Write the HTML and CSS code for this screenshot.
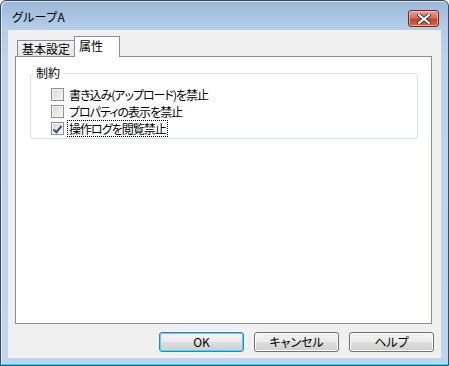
FILE: index.html
```html
<!DOCTYPE html>
<html lang="ja">
<head>
    <meta charset="UTF-8">
    <title>グループA</title>
    <link rel="stylesheet" href="styles.css">
</head>
<body>

    <div class="window">
        <div class="titlebar">
            <span class="title">グループA</span>
            <button class="close" aria-label="閉じる">
                <svg width="14" height="10" viewBox="0 0 14 10">
                    <path d="M2 1 L12 9 M12 1 L2 9" stroke="#3a3a3a" stroke-width="4" stroke-linecap="square"/>
                    <path d="M2 1 L12 9 M12 1 L2 9" stroke="#fff" stroke-width="2" stroke-linecap="square"/>
                </svg>
            </button>
        </div>

        <div class="client">
            <div class="tabs">
                <div class="tab">基本設定</div>
                <div class="tab active">属性</div>
            </div>

            <div class="panel">
                <fieldset class="group">
                    <legend>制約</legend>
                    <label class="check"><span class="box"></span><span class="text">書き込み(アップロード)を禁止</span></label>
                    <label class="check"><span class="box"></span><span class="text">プロパティの表示を禁止</span></label>
                    <label class="check"><span class="box checked"></span><span class="text focus">操作ログを閲覧禁止</span></label>
                </fieldset>
            </div>

            <div class="actions">
                <button class="btn default">OK</button>
                <button class="btn">キャンセル</button>
                <button class="btn">ヘルプ</button>
            </div>
        </div>
    </div>

</body>
</html>
```

FILE: styles.css
```css
body {
    margin: 0;
    font-family: "Noto Sans CJK JP", "Noto Sans", sans-serif;
    font-size: 12px;
    font-feature-settings: "palt";
    color: #000;
    background: #fff;
}

.window {
    width: 449px;
    height: 366px;
    box-sizing: border-box;
    border: 1px solid #3b4a5c;
    border-radius: 6px 6px 0 0;
    background: linear-gradient(#9cb8d8 0px, #b4cce8 26px, #bcd3ec 60px, #bfd5ed 100%);
    box-shadow: inset 0 -1px 0 #33d6ee, inset 1px 1px 0 rgba(255, 255, 255, 0.6);
    padding: 0 7px 7px 7px;
    display: flex;
    flex-direction: column;
}

.titlebar {
    height: 29px;
    display: flex;
    align-items: flex-start;
    justify-content: space-between;
}

.title {
    margin: 7px 0 0 4px;
    line-height: 17px;
    font-size: 12px;
    letter-spacing: 0.3px;
}

.close {
    width: 31px;
    height: 17px;
    margin: 9px 2px 0 0;
    padding: 0;
    border: 1px solid #6e2a22;
    border-radius: 3px;
    background: linear-gradient(#e8a493 0%, #d4735f 45%, #c2432c 55%, #d06a4c 100%);
    box-shadow: inset 0 0 0 1px rgba(255, 220, 210, 0.55);
    display: flex;
    align-items: center;
    justify-content: center;
}

.client {
    flex: 1;
    background-color: #f0f0f0;
    padding-top: 6px;
    padding-bottom: 5px;
    display: flex;
    flex-direction: column;
}

.tabs {
    display: flex;
    align-items: flex-end;
    height: 20px;
    margin: 0 9px 0 7px;
    padding-left: 2px;
}

.tab {
    height: 16px;
    box-sizing: border-box;
    border: 1px solid #898c95;
    border-bottom: none;
    background: linear-gradient(#f3f3f3, #e4e4e4);
    padding: 1px 0 0 0;
    line-height: 14px;
    width: 58px;
    text-align: center;
    white-space: nowrap;
}

.tab.active {
    height: 21px;
    width: 46px;
    margin-bottom: -1px;
    margin-left: -1px;
    background: #fff;
    padding: 2px 4px 0 4px;
    text-align: left;
    position: relative;
    z-index: 1;
}

.panel {
    height: 268px;
    box-sizing: border-box;
    margin: 0 9px 0 7px;
    border: 1px solid #898c95;
    background-color: #fff;
    padding: 9px 13px 0 14px;
}

.group {
    margin: 0;
    border: 1px solid #d5dfe5;
    border-radius: 3px;
    padding: 6px 0 7px 20px;
    height: 73px;
    box-sizing: border-box;
}

.group legend {
    padding: 0 3px;
    margin-left: -18px;
    line-height: 14px;
}

.check {
    display: flex;
    align-items: center;
    height: 17px;
    gap: 3px;
}

.box {
    width: 13px;
    height: 13px;
    box-sizing: border-box;
    border: 1px solid #8e8f8f;
    background: linear-gradient(135deg, #d8d8d8, #f6f6f6);
    box-shadow: inset 0 0 0 1px #f4f4f4;
    position: relative;
}

.box.checked::after {
    content: "";
    position: absolute;
    left: 3px;
    top: 1px;
    width: 3px;
    height: 7px;
    border-right: 2px solid #3b4e8a;
    border-bottom: 2px solid #3b4e8a;
    transform: rotate(40deg);
}

.text {
    line-height: 15px;
    padding: 0 1px;
    border: 1px solid transparent;
    letter-spacing: -1px;
}

.text.focus {
    border: 1px dotted #000;
}

.actions {
    display: flex;
    justify-content: flex-end;
    gap: 10px;
    margin-top: 8px;
    padding-right: 7px;
}

.btn {
    width: 85px;
    height: 20px;
    padding: 0;
    border: 1px solid #707070;
    border-radius: 3px;
    background: linear-gradient(#f2f2f2 0%, #ebebeb 50%, #dddddd 51%, #cfcfcf 100%);
    box-shadow: inset 0 0 0 1px #fcfcfc;
    font-family: "Noto Sans CJK JP", "Noto Sans", sans-serif;
    font-size: 12px;
    font-feature-settings: "palt";
    color: #000;
    line-height: 16px;
}

.btn.default {
    border-color: #3c7fb1;
    box-shadow: inset 0 0 0 1px #48d8fb;
}
```
